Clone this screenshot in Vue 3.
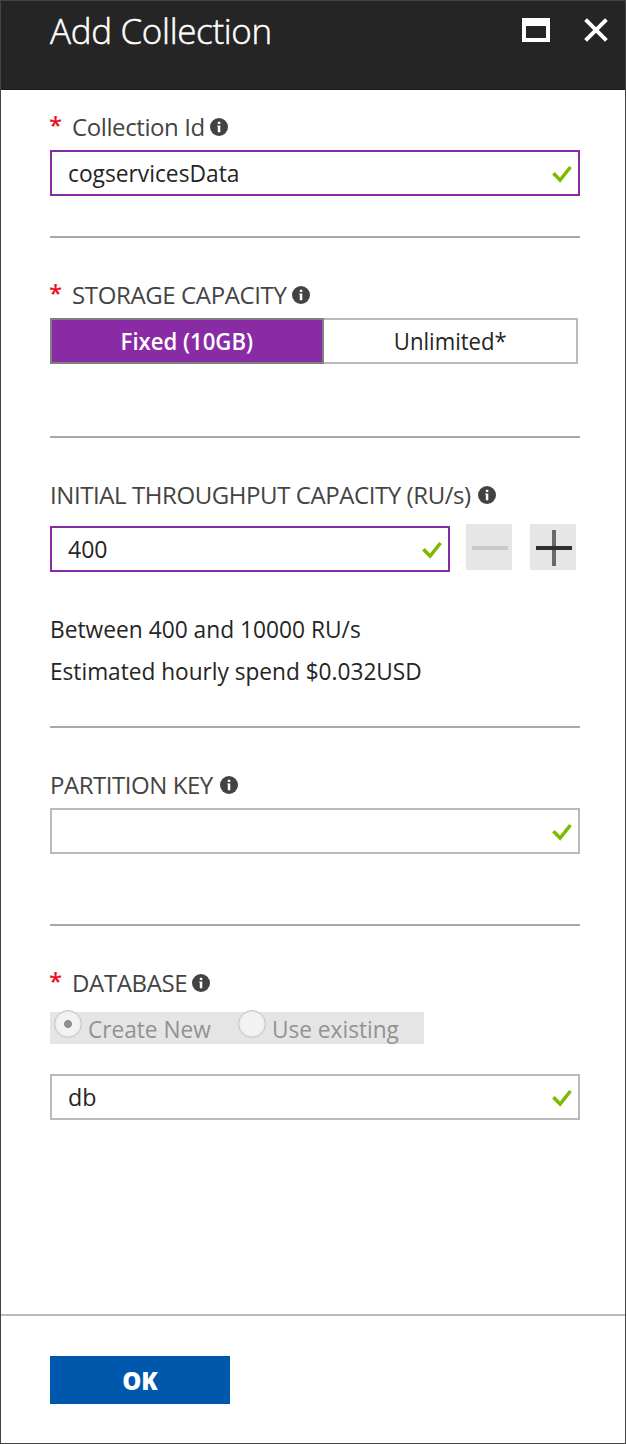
<script setup>
import { h, ref } from 'vue'

const collectionId = ref('cogservicesData')
const throughput = ref('400')
const database = ref('db')

const InfoIcon = () =>
  h('svg', { width: 18, height: 18, viewBox: '0 0 18 18' }, [
    h('circle', { cx: 9, cy: 9, r: 9, fill: '#424242' }),
    h('path', { d: 'M7.8 3.7h2.5v2.3H7.8zM7.2 7.4h3.1v6.9H7.8V8.4h-.6z', fill: '#fff' }),
  ])

const CheckIcon = () =>
  h('svg', { width: 20, height: 18, viewBox: '0 0 20 18' }, [
    h('path', { d: 'M1.4 8.2L8.1 15L18.5 2', fill: 'none', stroke: '#7fba00', 'stroke-width': 3.5 }),
  ])
</script>

<template>
  <div class="blade">
    <header class="header">
      <h1 class="title">Add Collection</h1>
      <div class="window-actions">
        <svg width="28" height="24" viewBox="0 0 28 24">
          <path d="M0 0h28v24H0zM4 8v12h20V8z" fill="#fff" fill-rule="evenodd" />
        </svg>
        <svg width="24" height="24" viewBox="0 0 24 24">
          <path d="M1.6 1.6L22.4 22.4M22.4 1.6L1.6 22.4" fill="none" stroke="#fff" stroke-width="4" />
        </svg>
      </div>
    </header>

    <main class="content">
      <div class="label">
        <span class="required">*</span><span class="t-collection">Collection Id</span><InfoIcon class="info" />
      </div>
      <div class="field active"><span class="value narrow">{{ collectionId }}</span><CheckIcon class="check" /></div>
      <hr class="rule gap-40" />

      <div class="label">
        <span class="required">*</span><span class="t-storage">STORAGE CAPACITY</span><InfoIcon class="info" />
      </div>
      <div class="segments">
        <div class="segment selected"><span>Fixed (10GB)</span></div>
        <div class="segment"><span>Unlimited*</span></div>
      </div>
      <hr class="rule gap-72" />

      <div class="label roomy">
        <span class="t-throughput">INITIAL THROUGHPUT CAPACITY (RU/s)</span><InfoIcon class="info wide" />
      </div>
      <div class="stepper">
        <div class="field active"><span class="value digits">{{ throughput }}</span><CheckIcon class="check" /></div>
        <div class="step">
          <svg width="46" height="46" viewBox="0 0 46 46">
            <path d="M6 24H42" stroke="#c9c9c9" stroke-width="4" />
          </svg>
        </div>
        <div class="step">
          <svg width="46" height="46" viewBox="0 0 46 46">
            <path d="M24 6V42" stroke="#696969" stroke-width="4" />
            <path d="M6 24H42" stroke="#303030" stroke-width="4" />
          </svg>
        </div>
      </div>
      <div class="hints">
        <div><span class="range">Between 400 and 10000 RU/s</span></div>
        <div><span>Estimated hourly spend $0.032USD</span></div>
      </div>
      <hr class="rule gap-34" />

      <div class="label">
        <span class="t-partition">PARTITION KEY</span><InfoIcon class="info wide" />
      </div>
      <div class="field"><span class="value"></span><CheckIcon class="check" /></div>
      <hr class="rule gap-70" />

      <div class="label radio-label">
        <span class="required">*</span><span class="t-database">DATABASE</span><InfoIcon class="info" />
      </div>
      <div class="radios">
        <div class="radio"><i class="dot checked"></i><span>Create New</span></div>
        <div class="radio"><i class="dot"></i><span>Use existing</span></div>
      </div>
      <div class="field"><span class="value short">{{ database }}</span><CheckIcon class="check" /></div>
    </main>

    <footer class="footer">
      <button class="ok" type="button">OK</button>
    </footer>
  </div>
</template>

<style>
body {
  margin: 0;
}
</style>

<style scoped>
.blade {
  box-sizing: border-box;
  width: 626px;
  height: 1444px;
  border: 1px solid #444;
  display: flex;
  flex-direction: column;
  background: #fff;
  color: #252525;
  font: 400 24px/32px "Open Sans", "Noto Sans", sans-serif;
  white-space: nowrap;
}
svg {
  display: block;
  flex: none;
}
.header {
  box-sizing: border-box;
  height: 89px;
  padding: 6px 17px 0 49px;
  display: flex;
  justify-content: space-between;
  align-items: flex-start;
  background: #252525;
  border-bottom: 1px solid #211a21;
}
.title {
  margin: 0;
  color: #fff;
  font-size: 35px;
  font-weight: 300;
  line-height: 48px;
  letter-spacing: -0.33px;
  -webkit-text-stroke: 0.5px #fff;
}
.window-actions {
  display: flex;
  gap: 34px;
  padding-top: 11px;
}
.content {
  flex: 1;
  padding: 21px 45px 0 49px;
}
.label {
  display: flex;
  height: 32px;
  margin-bottom: 7px;
  color: #444;
}
.label.roomy {
  margin-bottom: 15px;
}
.label.radio-label {
  margin-bottom: 13px;
}
.required {
  width: 23px;
  margin-left: -1px;
  color: #e81123;
  font-weight: 600;
  line-height: 28px;
}
.t-collection { letter-spacing: -0.4px; }
.t-storage { letter-spacing: -0.37px; }
.t-throughput { letter-spacing: -0.42px; }
.t-partition { letter-spacing: -0.46px; }
.t-database { letter-spacing: -0.35px; }
.info {
  margin: 7px 0 0 5px;
}
.info.wide {
  margin-left: 7px;
}
.field {
  box-sizing: border-box;
  width: 530px;
  height: 46px;
  border: 2px solid #bababa;
  padding: 0 6px 0 16px;
  display: flex;
  justify-content: space-between;
  align-items: center;
  line-height: 42px;
}
.field.active {
  border-color: #892ba4;
}
.check {
  margin-top: 2px;
}
.value {
  transform-origin: left;
}
.value.narrow {
  transform: scaleX(0.948);
}
.value.digits {
  transform: scaleX(0.96);
}
.value.short {
  transform: scaleX(0.97);
}
.rule {
  height: 2px;
  border: 0;
  background: #a9a9a9;
  margin: 0 0 41px;
  width: 530px;
}
.gap-34 { margin-top: 34px; }
.gap-40 { margin-top: 40px; }
.gap-70 { margin-top: 70px; }
.gap-72 { margin-top: 72px; }
.segments {
  display: flex;
  width: 528px;
}
.segment {
  box-sizing: border-box;
  width: 254px;
  height: 46px;
  border: 2px solid #bababa;
  border-left: 0;
  text-align: center;
  line-height: 42px;
}
.segment span {
  display: inline-block;
  transform: scaleX(0.922);
}
.segment.selected {
  width: 274px;
  border: 2px solid #7f7f7f;
  background: #892ba4;
  color: #fff;
  font-weight: 600;
}
.stepper {
  display: flex;
  align-items: flex-start;
}
.stepper .field {
  width: 400px;
}
.step {
  width: 46px;
  height: 46px;
  margin: -2px 2px 0 16px;
  background: #e6e6e6;
}
.hints {
  margin-top: 36px;
  line-height: 42px;
}
.hints span {
  display: inline-block;
  transform: scaleX(0.943);
  transform-origin: left;
}
.hints .range {
  transform: scaleX(0.948);
}
.radios {
  box-sizing: border-box;
  width: 374px;
  height: 32px;
  margin-bottom: 30px;
  padding-left: 4px;
  display: flex;
  background: #e5e5e5;
  color: #929292;
}
.radio {
  display: flex;
  width: 184px;
}
.radio span {
  margin: 1px 0 0 5.5px;
  transform: scaleX(0.943);
  transform-origin: left;
}
.dot {
  box-sizing: border-box;
  flex: none;
  width: 28px;
  height: 28px;
  margin-top: -2px;
  border: 1px solid #c4c4c4;
  border-radius: 50%;
  background: #f2f2f2;
  box-shadow: inset 0 0 2px #ccc;
}
.dot.checked {
  background: radial-gradient(circle, #909090 3.6px, #f2f2f2 4.4px);
}
.footer {
  box-sizing: border-box;
  height: 129px;
  border-top: 2px solid #bababa;
  padding: 40px 0 0 49px;
}
.ok {
  display: block;
  width: 180px;
  height: 48px;
  border: 0;
  padding: 2px 0 0;
  background: #0058ad;
  color: #fff;
  font: 800 24px/46px "Open Sans", "Noto Sans", sans-serif;
}
</style>
